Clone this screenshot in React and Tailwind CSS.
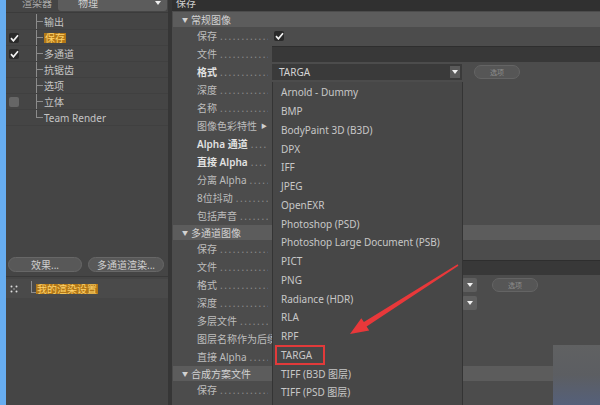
import React from 'react';

const Check = () => (
  <span className="w-[10px] h-[10px] rounded-[2px] bg-[#2a2a2a] flex items-center justify-center">
    <svg width="9" height="8" viewBox="0 0 9 8">
      <path d="M1 4.2 L3.4 6.8 L8 1.2" stroke="#f2f2f2" strokeWidth="1.7" fill="none" />
    </svg>
  </span>
);

const Arrow = ({ big }) => (
  <span
    className={
      big
        ? 'w-[15px] h-[14px] rounded-[2px] bg-[#5f5f5f] flex items-center justify-center'
        : 'w-[10px] h-[12px] bg-[#5a5a5a] flex items-center justify-center mr-[2px]'
    }
  >
    <svg width="6" height="4" viewBox="0 0 6 4">
      <path d="M0 0 H6 L3 4 Z" fill="#f0f0f0" />
    </svg>
  </span>
);

const OptionBtn = ({ className }) => (
  <span
    className={
      'w-[46px] h-[14px] rounded-full bg-[#565656] border border-[#646464] text-[7px] text-[#8c8c8c] flex items-center justify-center ' +
      className
    }
  >
    选项
  </span>
);

const treeItems = [
  { name: '输出' },
  { name: '保存', check: true, active: true },
  { name: '多通道', check: true },
  { name: '抗锯齿' },
  { name: '选项' },
  { name: '立体', box: true },
  { name: 'Team Render' },
];

const formats = [
  'Arnold - Dummy',
  'BMP',
  'BodyPaint 3D (B3D)',
  'DPX',
  'IFF',
  'JPEG',
  'OpenEXR',
  'Photoshop (PSD)',
  'Photoshop Large Document (PSB)',
  'PICT',
  'PNG',
  'Radiance (HDR)',
  'RLA',
  'RPF',
  'TARGA',
  'TIFF (B3D 图层)',
  'TIFF (PSD 图层)',
];

// one parameter row in the attribute panel
const Row = ({ label, bold, arrowMark, children }) => (
  <div className="h-[18px] flex items-center">
    <div className="w-[100px] flex items-center pl-[25px] pr-[4px]">
      <span className={'whitespace-nowrap ' + (bold ? 'font-semibold text-[#e2e2e2]' : '')}>{label}</span>
      {arrowMark ? (
        <span className="flex-1 flex justify-end pr-[1px] text-[6px] text-[#d0d0d0]">▶</span>
      ) : (
        <span className="flex-1 overflow-hidden whitespace-nowrap text-[#8d8d8d] tracking-[1.6px] pl-[3px]">
          ......................
        </span>
      )}
    </div>
    <div className="flex-1 flex items-center">{children}</div>
  </div>
);

const Section = ({ title }) => (
  <div className="h-[15px] ml-[1px] bg-[#5c5c5c] flex items-center pl-[9px] text-[#d2d2d2]">
    <span className="text-[6px] mr-[3px]">▼</span>
    {title}
  </div>
);

export default function App() {
  return (
    <div className="relative w-[600px] h-[405px] flex overflow-hidden bg-[#4a4a4a] text-[10px] leading-none text-[#bdbdbd] font-['Noto_Sans','Noto_Sans_CJK_SC',sans-serif]">
      {/* Left render settings column */}
      <div className="w-[6px] bg-[#67adf0]" />
      <div className="w-[162px] bg-[#454545] flex flex-col">
        <div className="h-[13px] overflow-hidden border-b border-[#3b3b3b]">
          <div className="-mt-[5px] h-[16px] flex items-center">
            <span className="ml-[16px] w-[36px] text-[#a8a8a8]">渲染器</span>
            <span className="flex-1 h-[15px] mr-[1px] rounded-[3px] bg-[#5c5c5c] flex items-center justify-between pl-[20px] pr-[6px] text-[#cfcfcf]">
              物理
              <svg width="6" height="4" viewBox="0 0 6 4">
                <path d="M0 0 H6 L3 4 Z" fill="#eee" />
              </svg>
            </span>
          </div>
        </div>
        <div className="mt-[1px]">
          {treeItems.map((it, i) => (
            <div key={it.name} className="h-[16px] flex items-center border-b border-[#404040]">
              <span className="w-[24px] pl-[3px] flex items-center">
                {it.check && <Check />}
                {it.box && <span className="w-[10px] h-[10px] rounded-[2px] bg-[#666]" />}
              </span>
              <span className="w-[7px] self-stretch flex flex-col ml-[6px]">
                <span className="h-1/2 border-l border-b border-[#8c8c8c]" />
                <span className={i === treeItems.length - 1 ? 'h-1/2' : 'h-1/2 border-l border-[#8c8c8c]'} />
              </span>
              <span
                className={
                  'ml-[1px] ' +
                  (it.active ? 'bg-[#b27818] text-[#ffd36b] px-[1px]' : 'text-[#c4c4c4]')
                }
              >
                {it.name}
              </span>
            </div>
          ))}
        </div>
        <div className="flex-1" />
        <div className="h-[15px] flex gap-[6px] pl-[2px]">
          <span className="w-[74px] rounded-full bg-[#585858] border border-[#676767] flex items-center justify-center text-[#cfcfcf]">
            效果...
          </span>
          <span className="w-[76px] rounded-full bg-[#585858] border border-[#676767] flex items-center justify-center text-[#cfcfcf]">
            多通道渲染...
          </span>
        </div>
        <div className="h-[4px]" />
        <div className="h-[129px] border-t border-[#393939] pt-[2px]">
          <div className="h-[19px] bg-[#4a4a4a] flex items-center">
            <svg className="ml-[4px]" width="8" height="8" viewBox="0 0 8 8">
              <circle cx="1.5" cy="1.5" r="1" fill="#ddd" />
              <circle cx="6.5" cy="1.5" r="1" fill="#ddd" />
              <circle cx="1.5" cy="6.5" r="1" fill="#ddd" />
              <circle cx="6.5" cy="6.5" r="1" fill="#ddd" />
              <circle cx="4" cy="4" r="0.8" fill="#aaa" />
            </svg>
            <span className="ml-[13px] w-[5px] h-[12px] -mt-[4px] border-l border-b border-[#8c8c8c]" />
            <span className="bg-[#b27818] text-[#ffd36b] px-[1px]">我的渲染设置</span>
          </div>
        </div>
      </div>
      <div className="w-[4px] bg-[#363636]" />

      {/* Right attribute panel */}
      <div className="flex-1 flex flex-col bg-[#4c4c4c]">
        <div className="h-[11px] bg-[#303030] overflow-hidden">
          <div className="-mt-[4px] h-[14px] flex items-center pl-[4px] text-[#cfcfcf]">保存</div>
        </div>
        <div className="h-[1px]" />
        <Section title="常规图像" />
        <Row label="保存">
          <span className="ml-[2px]">
            <Check />
          </span>
        </Row>
        <Row label="文件">
          <span className="flex-1 h-[16px] bg-[#383838] border-t border-[#2e2e2e]" />
        </Row>
        <Row label="格式" bold>
          <span className="w-[190px] h-[16px] bg-[#3a3a3a] flex items-center justify-between pl-[7px] text-[#d4d4d4]">
            TARGA
            <Arrow />
          </span>
          <OptionBtn className="ml-[12px]" />
        </Row>
        <Row label="深度" />
        <Row label="名称" />
        <Row label="图像色彩特性" arrowMark />
        <Row label="Alpha 通道" bold />
        <Row label="直接 Alpha" bold />
        <Row label="分离 Alpha" />
        <Row label="8位抖动" />
        <Row label="包括声音" />
        <Section title="多通道图像" />
        <Row label="保存" />
        <Row label="文件">
          <span className="flex-1 h-[15px] bg-[#383838] border-t border-[#2e2e2e]" />
        </Row>
        <Row label="格式">
          <span className="w-[205px] h-[14px] flex justify-end">
            <Arrow big />
          </span>
          <OptionBtn className="ml-[15px]" />
        </Row>
        <Row label="深度">
          <span className="w-[205px] h-[14px] flex justify-end">
            <Arrow big />
          </span>
        </Row>
        <Row label="多层文件" />
        <Row label="图层名称作为后缀" />
        <Row label="直接 Alpha" />
        <Section title="合成方案文件" />
        <Row label="保存" />
      </div>

      {/* Open format dropdown */}
      <div className="absolute left-[272px] top-[82px] w-[191px] h-[330px] bg-[#474747] border-l border-[#3a3a3a] border-r border-[#343434] pt-[1px]">
        {formats.map((f) => (
          <div key={f} className="h-[18.75px] flex items-center pl-[8px] text-[10px] text-[#c8c8c8] whitespace-nowrap">
            {f === 'TARGA' ? (
              <span className="-ml-[6px] h-[20px] pl-[4px] pr-[11px] border-2 border-[#e23a3a] flex items-center">
                {f}
              </span>
            ) : (
              f
            )}
          </div>
        ))}
      </div>

      {/* watermark corner */}
      <div className="absolute left-[553px] top-[345px] w-[47px] h-[60px] bg-gradient-to-b from-[#606162] via-[#5c5e62] to-[#55607a]" />

      {/* red annotation arrow */}
      <svg className="absolute left-0 top-0 pointer-events-none" width="600" height="405" viewBox="0 0 600 405">
        <polygon
          points="458.4,265.8 366.6,326.5 369.2,330.4 350,334 361.3,318.2 363.9,322.1 457.6,264.2"
          fill="#e8383a"
        />
      </svg>
    </div>
  );
}
